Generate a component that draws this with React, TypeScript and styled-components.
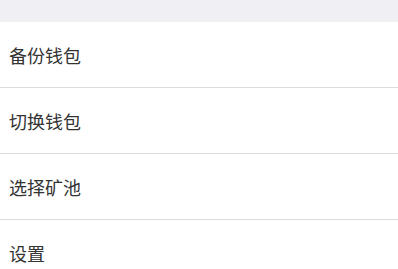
import React from "react";
import styled, { createGlobalStyle } from "styled-components";

const GlobalStyle = createGlobalStyle`
  html, body {
    margin: 0;
    padding: 0;
    background: #ffffff;
  }
  body {
    font-family: "Noto Sans CJK SC", "Noto Sans", sans-serif;
  }
`;

const Page = styled.div`
  display: flex;
  flex-direction: column;
`;

const TopBand = styled.div`
  height: 22px;
  background-color: #efeff4;
`;

const Menu = styled.ul`
  list-style: none;
  margin: 0;
  padding: 0;
  background: #ffffff;
`;

const MenuItem = styled.li`
  display: flex;
  align-items: center;
  height: 65px;
  padding-left: 9px;
  font-size: 18px;
  color: #333333;
  border-bottom: 1px solid #dcdcdc;
  &:last-child {
    border-bottom: none;
  }
`;

const items = ["备份钱包", "切换钱包", "选择矿池", "设置"];

export default function App() {
  return (
    <>
      <GlobalStyle />
      <Page>
        <TopBand />
        <Menu>
          {items.map((label) => (
            <MenuItem key={label}>{label}</MenuItem>
          ))}
        </Menu>
      </Page>
    </>
  );
}
